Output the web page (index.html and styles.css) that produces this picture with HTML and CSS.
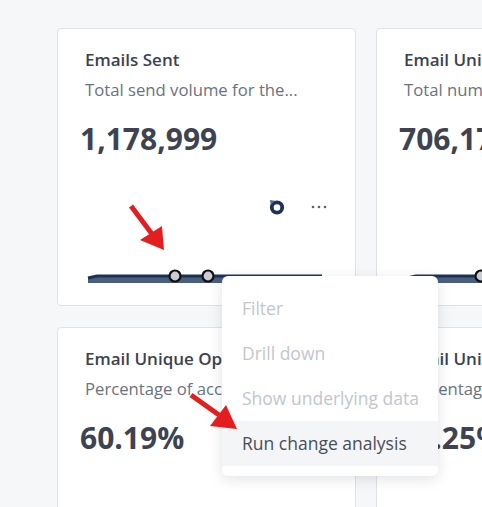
FILE: index.html
```html
<!DOCTYPE html>
<html lang="en">
<head>
    <meta charset="UTF-8">
    <meta name="viewport" content="width=device-width, initial-scale=1.0">
    <title>Email Metrics</title>
    <link rel="stylesheet" href="styles.css">
</head>
<body>
    <div class="board">
        <div class="card">
            <div class="card-title">Emails Sent</div>
            <div class="card-desc">Total send volume for the...</div>
            <div class="card-value">1,178,999</div>
            <div class="chart-tools">
                <svg class="tool-ring" width="16" height="16" viewBox="0 0 16 16">
                    <circle cx="8" cy="8.5" r="5.2" fill="none" stroke="#1c3356" stroke-width="3.8"/>
                    <polygon points="1,1 5.8,1.7 1.7,5.8" fill="#5a6f8c"/>
                </svg>
                <svg class="tool-more" width="16" height="16" viewBox="0 0 16 16">
                    <circle cx="2" cy="8" r="1.3" fill="#5b6270"/>
                    <circle cx="8" cy="8" r="1.3" fill="#5b6270"/>
                    <circle cx="14" cy="8" r="1.3" fill="#5b6270"/>
                </svg>
            </div>
            <svg class="card-chart" width="244" height="20" viewBox="0 0 244 20">
                <polygon points="3,12 12,10 237,10 237,17 3,17" fill="#4a5f7e"/>
                <polyline points="3,12 12,10 237,10" fill="none" stroke="#1c3356" stroke-width="3.2"/>
                <circle cx="90" cy="10" r="5.5" fill="#c9cdd3" stroke="#111" stroke-width="2.2"/>
                <circle cx="123" cy="10" r="5.5" fill="#c9cdd3" stroke="#111" stroke-width="2.2"/>
            </svg>
        </div>

        <div class="card">
            <div class="card-title">Email Unique Opens</div>
            <div class="card-desc">Total number of unique...</div>
            <div class="card-value">706,171</div>
            <div class="chart-tools"></div>
            <svg class="card-chart" width="244" height="20" viewBox="0 0 244 20">
                <polygon points="3,12 12,10 237,10 237,17 3,17" fill="#4a5f7e"/>
                <polyline points="3,12 12,10 237,10" fill="none" stroke="#1c3356" stroke-width="3.2"/>
                <circle cx="77" cy="10" r="5.5" fill="#c9cdd3" stroke="#111" stroke-width="2.2"/>
            </svg>
        </div>

        <div class="card">
            <div class="card-title">Email Unique Open Rate</div>
            <div class="card-desc">Percentage of accounts that...</div>
            <div class="card-value">60.19%</div>
        </div>

        <div class="card">
            <div class="card-title">Email Unique Click Rate</div>
            <div class="card-desc">Percentage of accounts that...</div>
            <div class="card-value">13.25%</div>
        </div>
    </div>

    <ul class="menu">
        <li class="menu-item is-disabled">Filter</li>
        <li class="menu-item is-disabled">Drill down</li>
        <li class="menu-item is-disabled">Show underlying data</li>
        <li class="menu-item is-active">Run change analysis</li>
    </ul>

    <!-- callout arrows -->
    <svg class="callouts" width="482" height="507" viewBox="0 0 482 507">
        <line x1="131" y1="206" x2="152" y2="234" stroke="#e41e1e" stroke-width="5"/>
        <polygon points="140,240 162,226 164,250" fill="#e41e1e"/>
        <line x1="191" y1="395" x2="219" y2="415" stroke="#e41e1e" stroke-width="5"/>
        <polygon points="210,426 226,405 237,429" fill="#e41e1e"/>
    </svg>
</body>
</html>
```

FILE: styles.css
```css
* {
    box-sizing: border-box;
    margin: 0;
    padding: 0;
}

body {
    font-family: 'Open Sans', 'Noto Sans', sans-serif;
    background-color: #f6f7f9;
    width: 482px;
    height: 507px;
    overflow: hidden;
    position: relative;
}

.board {
    display: grid;
    grid-template-columns: 299px 299px;
    grid-auto-rows: 278px;
    gap: 21px 20px;
    padding: 28px 0 0 57px;
    width: max-content;
}

.card {
    background-color: #fff;
    border: 1px solid #dfe2e6;
    border-radius: 4px;
    padding: 19px 27px 0;
    display: flex;
    flex-direction: column;
    overflow: hidden;
}

.card-title {
    font-size: 17px;
    font-weight: 600;
    line-height: 24px;
    color: #3b4250;
    white-space: nowrap;
}

.card-desc {
    font-size: 16.7px;
    line-height: 24px;
    margin-top: 6px;
    color: #6a727e;
    white-space: nowrap;
}

.card-value {
    font-size: 30px;
    font-weight: 700;
    line-height: 36px;
    margin: 19px 0 0 -5px;
    color: #3d4350;
    white-space: nowrap;
}

.chart-tools {
    display: flex;
    justify-content: flex-end;
    align-items: center;
    gap: 26px;
    height: 16px;
    margin-top: 42px;
    padding-right: 1px;
}

.card-chart {
    display: block;
    margin-top: 51px;
}

.menu {
    list-style: none;
    position: absolute;
    left: 222px;
    top: 276px;
    width: 216px;
    padding: 10px 0;
    background-color: #fff;
    border-radius: 6px;
    box-shadow: 0 3px 14px rgba(20, 30, 50, 0.13);
}

.menu-item {
    height: 45px;
    line-height: 44px;
    padding: 0 20px;
    font-size: 17.5px;
    white-space: nowrap;
}

.menu-item.is-disabled {
    color: #c2c6cc;
}

.menu-item.is-active {
    color: #484e58;
    background-color: #f4f5f7;
}

.callouts {
    position: absolute;
    top: 0;
    left: 0;
    pointer-events: none;
}
```
